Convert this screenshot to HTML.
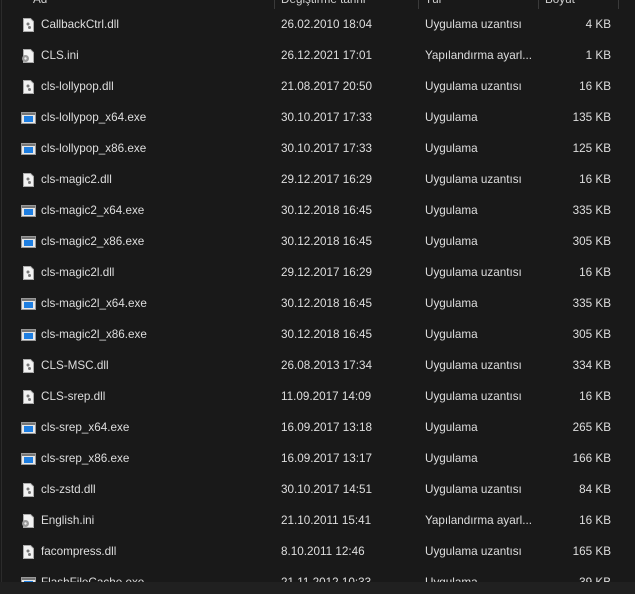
<!DOCTYPE html><html><head><meta charset="utf-8"><style>
body{margin:0;width:635px;height:594px;background:#191919;overflow:hidden;font-family:"Liberation Sans",sans-serif;font-size:11.7px;color:#dedede;position:relative}
.lb{position:absolute;left:1px;top:0;width:1px;height:582px;background:#2b2b2b}
.bot{position:absolute;left:0;top:582px;width:635px;height:12px;background:#202020}
.hdr{position:absolute;top:-9px;left:0;width:635px;height:16px;color:#cfcfcf}
.hdr span{position:absolute;top:2px}
.div{position:absolute;top:0;width:1px;height:9px;background:#3a3a3a}
.row{position:absolute;left:0;width:635px;height:20px;line-height:20px}
.row span{position:absolute;top:0;white-space:nowrap}
.n{left:41px}.d{left:281px}.t{left:425px}.s{right:24px}
.ic{position:absolute;top:3px}
</style></head><body>
<div class="hdr"><span style="left:33px">Ad</span><span style="left:281px">Değiştirme tarihi</span><span style="left:425px">Tür</span><span style="left:545px">Boyut</span></div>
<div class="div" style="left:274px"></div><div class="div" style="left:418px"></div><div class="div" style="left:538px"></div><div class="div" style="left:618px"></div>
<div class="lb"></div>
<div id="rows"></div>
<div class="bot"></div>
<script>
var R=[["CallbackCtrl.dll","26.02.2010 18:04","Uygulama uzantısı","4 KB","d"],
["CLS.ini","26.12.2021 17:01","Yapılandırma ayarl...","1 KB","i"],
["cls-lollypop.dll","21.08.2017 20:50","Uygulama uzantısı","16 KB","d"],
["cls-lollypop_x64.exe","30.10.2017 17:33","Uygulama","135 KB","e"],
["cls-lollypop_x86.exe","30.10.2017 17:33","Uygulama","125 KB","e"],
["cls-magic2.dll","29.12.2017 16:29","Uygulama uzantısı","16 KB","d"],
["cls-magic2_x64.exe","30.12.2018 16:45","Uygulama","335 KB","e"],
["cls-magic2_x86.exe","30.12.2018 16:45","Uygulama","305 KB","e"],
["cls-magic2l.dll","29.12.2017 16:29","Uygulama uzantısı","16 KB","d"],
["cls-magic2l_x64.exe","30.12.2018 16:45","Uygulama","335 KB","e"],
["cls-magic2l_x86.exe","30.12.2018 16:45","Uygulama","305 KB","e"],
["CLS-MSC.dll","26.08.2013 17:34","Uygulama uzantısı","334 KB","d"],
["CLS-srep.dll","11.09.2017 14:09","Uygulama uzantısı","16 KB","d"],
["cls-srep_x64.exe","16.09.2017 13:18","Uygulama","265 KB","e"],
["cls-srep_x86.exe","16.09.2017 13:17","Uygulama","166 KB","e"],
["cls-zstd.dll","30.10.2017 14:51","Uygulama uzantısı","84 KB","d"],
["English.ini","21.10.2011 15:41","Yapılandırma ayarl...","16 KB","i"],
["facompress.dll","8.10.2011 12:46","Uygulama uzantısı","165 KB","d"],
["FlashFileCache.exe","21.11.2012 10:33","Uygulama","39 KB","e"]];
var D='<svg class="ic" style="left:23px" width="11" height="14"><path d="M0.5 0.5H7.5L10.5 3.5V13.5H0.5Z" fill="#f2f2f2" stroke="#aaa"/><circle cx="5" cy="6" r="1.5" fill="#777"/><circle cx="6.5" cy="9.5" r="1.5" fill="#777"/></svg>';
var I='<svg class="ic" style="left:21px" width="13" height="14"><path d="M2.5 0.5H9.5L12.5 3.5V13.5H2.5Z" fill="#f2f2f2" stroke="#aaa"/><circle cx="4.5" cy="9.5" r="3.5" fill="#999"/><circle cx="4.5" cy="9.5" r="1.2" fill="#eee"/></svg>';
var E='<svg class="ic" style="left:21px;top:4px" width="15" height="12"><rect x="0.5" y="0.5" width="14" height="11" fill="#e8e8e8" stroke="#999"/><rect x="1" y="1" width="13" height="2" fill="#777"/><rect x="3" y="4" width="9" height="6" fill="#1e7ee0"/></svg>';
var h='';R.forEach(function(r,i){h+='<div class="row" style="top:'+(15+i*31)+'px">'+(r[4]=='d'?D:r[4]=='i'?I:E)+'<span class="n">'+r[0]+'</span><span class="d">'+r[1]+'</span><span class="t">'+r[2]+'</span><span class="s">'+r[3]+'</span></div>'});
document.getElementById('rows').innerHTML=h;
</script>
</body></html>
